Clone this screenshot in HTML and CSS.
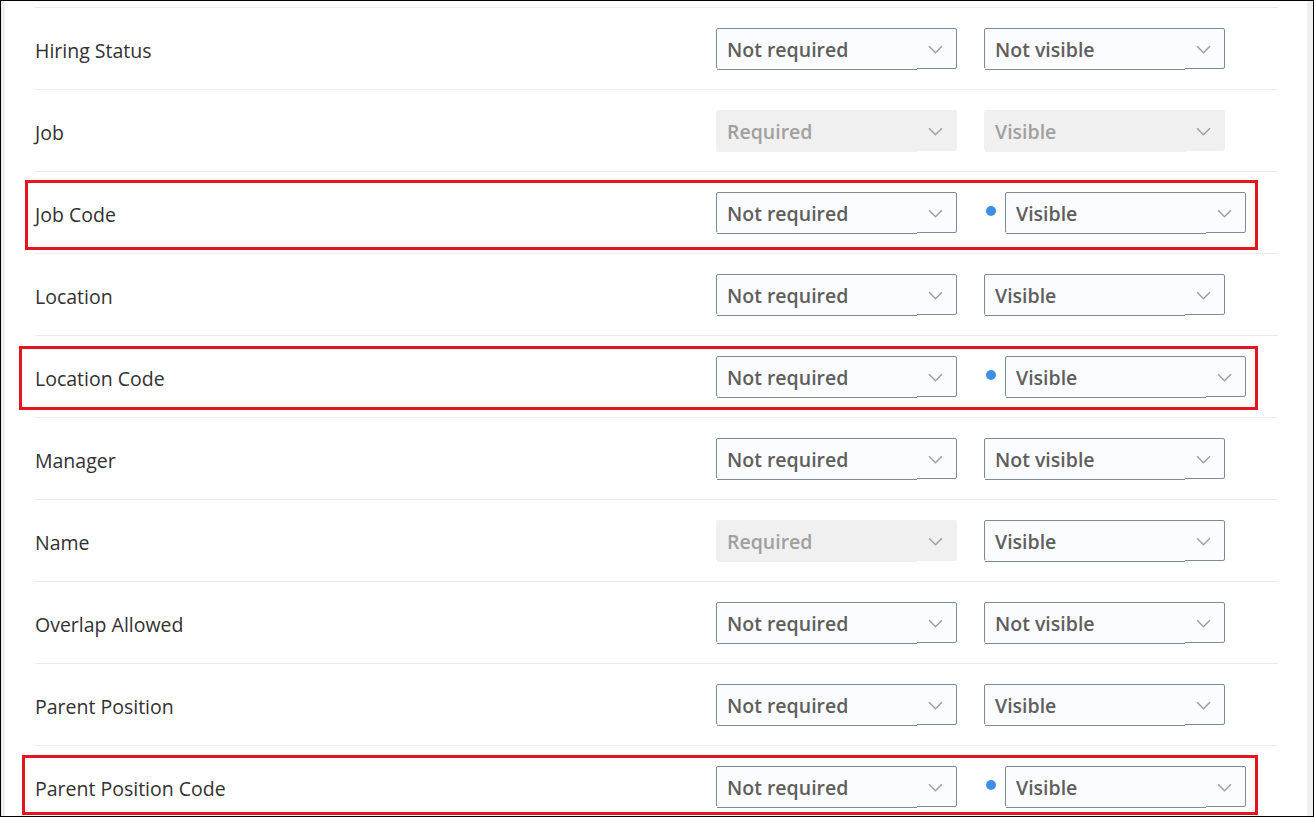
FILE: index.html
```html
<!DOCTYPE html>
<html lang="en">
<head>
    <meta charset="UTF-8">
    <meta name="viewport" content="width=device-width, initial-scale=1.0">
    <title>Position Fields | Settings</title>
    <link rel="stylesheet" href="styles.css">
</head>
<body>
    <div class="window">
        <div class="edge"></div>

        <div class="content">
            <div class="field-list">

                <div class="field-row">
                    <div class="field-name">Hiring Status</div>
                    <div class="field-cell">
                        <div class="select"><span>Not required</span><svg class="chevron" viewBox="0 0 14 8"><path d="M1 1l6 6 6-6"/></svg></div>
                    </div>
                    <div class="field-cell">
                        <div class="select"><span>Not visible</span><svg class="chevron" viewBox="0 0 14 8"><path d="M1 1l6 6 6-6"/></svg></div>
                    </div>
                </div>

                <div class="field-row">
                    <div class="field-name">Job</div>
                    <div class="field-cell">
                        <div class="select disabled"><span>Required</span><svg class="chevron" viewBox="0 0 14 8"><path d="M1 1l6 6 6-6"/></svg></div>
                    </div>
                    <div class="field-cell">
                        <div class="select disabled"><span>Visible</span><svg class="chevron" viewBox="0 0 14 8"><path d="M1 1l6 6 6-6"/></svg></div>
                    </div>
                </div>

                <div class="field-row">
                    <span class="mark mark-job-code"></span>
                    <div class="field-name">Job Code</div>
                    <div class="field-cell">
                        <div class="select"><span>Not required</span><svg class="chevron" viewBox="0 0 14 8"><path d="M1 1l6 6 6-6"/></svg></div>
                    </div>
                    <div class="field-cell">
                        <span class="changed-dot"></span>
                        <div class="select"><span>Visible</span><svg class="chevron" viewBox="0 0 14 8"><path d="M1 1l6 6 6-6"/></svg></div>
                    </div>
                </div>

                <div class="field-row">
                    <div class="field-name">Location</div>
                    <div class="field-cell">
                        <div class="select"><span>Not required</span><svg class="chevron" viewBox="0 0 14 8"><path d="M1 1l6 6 6-6"/></svg></div>
                    </div>
                    <div class="field-cell">
                        <div class="select"><span>Visible</span><svg class="chevron" viewBox="0 0 14 8"><path d="M1 1l6 6 6-6"/></svg></div>
                    </div>
                </div>

                <div class="field-row">
                    <span class="mark mark-location-code"></span>
                    <div class="field-name">Location Code</div>
                    <div class="field-cell">
                        <div class="select"><span>Not required</span><svg class="chevron" viewBox="0 0 14 8"><path d="M1 1l6 6 6-6"/></svg></div>
                    </div>
                    <div class="field-cell">
                        <span class="changed-dot"></span>
                        <div class="select"><span>Visible</span><svg class="chevron" viewBox="0 0 14 8"><path d="M1 1l6 6 6-6"/></svg></div>
                    </div>
                </div>

                <div class="field-row">
                    <div class="field-name">Manager</div>
                    <div class="field-cell">
                        <div class="select"><span>Not required</span><svg class="chevron" viewBox="0 0 14 8"><path d="M1 1l6 6 6-6"/></svg></div>
                    </div>
                    <div class="field-cell">
                        <div class="select"><span>Not visible</span><svg class="chevron" viewBox="0 0 14 8"><path d="M1 1l6 6 6-6"/></svg></div>
                    </div>
                </div>

                <div class="field-row">
                    <div class="field-name">Name</div>
                    <div class="field-cell">
                        <div class="select disabled"><span>Required</span><svg class="chevron" viewBox="0 0 14 8"><path d="M1 1l6 6 6-6"/></svg></div>
                    </div>
                    <div class="field-cell">
                        <div class="select"><span>Visible</span><svg class="chevron" viewBox="0 0 14 8"><path d="M1 1l6 6 6-6"/></svg></div>
                    </div>
                </div>

                <div class="field-row">
                    <div class="field-name">Overlap Allowed</div>
                    <div class="field-cell">
                        <div class="select"><span>Not required</span><svg class="chevron" viewBox="0 0 14 8"><path d="M1 1l6 6 6-6"/></svg></div>
                    </div>
                    <div class="field-cell">
                        <div class="select"><span>Not visible</span><svg class="chevron" viewBox="0 0 14 8"><path d="M1 1l6 6 6-6"/></svg></div>
                    </div>
                </div>

                <div class="field-row">
                    <div class="field-name">Parent Position</div>
                    <div class="field-cell">
                        <div class="select"><span>Not required</span><svg class="chevron" viewBox="0 0 14 8"><path d="M1 1l6 6 6-6"/></svg></div>
                    </div>
                    <div class="field-cell">
                        <div class="select"><span>Visible</span><svg class="chevron" viewBox="0 0 14 8"><path d="M1 1l6 6 6-6"/></svg></div>
                    </div>
                </div>

                <div class="field-row">
                    <span class="mark mark-parent-code"></span>
                    <div class="field-name">Parent Position Code</div>
                    <div class="field-cell">
                        <div class="select"><span>Not required</span><svg class="chevron" viewBox="0 0 14 8"><path d="M1 1l6 6 6-6"/></svg></div>
                    </div>
                    <div class="field-cell">
                        <span class="changed-dot"></span>
                        <div class="select"><span>Visible</span><svg class="chevron" viewBox="0 0 14 8"><path d="M1 1l6 6 6-6"/></svg></div>
                    </div>
                </div>

            </div>
        </div>

        <div class="scroll-track"></div>
    </div>
</body>
</html>
```

FILE: styles.css
```css
* {
    margin: 0;
    padding: 0;
    box-sizing: border-box;
    font-family: 'Open Sans', 'Noto Sans', sans-serif;
}

:root {
    --text: #323130;
    --select-text: #605e5c;
    --muted: #a19f9d;
    --divider: #edebe9;
    --field-border: #7a8c98;
    --field-bg: #fafcff;
    --disabled-bg: #f0f0f1;
    --accent: #3d8fe6;
    --mark: #e3161f;
}

body {
    background-color: #ffffff;
    color: var(--text);
    overflow: hidden;
}

.window {
    height: 817px;
    border: 1px solid #000;
    display: flex;
    overflow: hidden;
    background-color: #ffffff;
}

.edge {
    width: 4px;
    background-color: #efefef;
}

.scroll-track {
    width: 6px;
    background-color: #efefef;
}

.content {
    flex: 1;
    padding: 6px 29px 0 30px;
    overflow: hidden;
}

.field-row {
    position: relative;
    height: 82px;
    border-top: 1px solid var(--divider);
    display: grid;
    grid-template-columns: 654px 241px auto;
    column-gap: 27px;
    align-items: center;
}

.field-name {
    font-size: 19.5px;
    padding-top: 3px;
    color: var(--text);
    white-space: nowrap;
}

.field-cell {
    display: flex;
    align-items: center;
}

.select {
    position: relative;
    width: 241px;
    height: 41px;
    padding: 2px 13px 0 10px;
    display: flex;
    align-items: center;
    justify-content: space-between;
    border: 1px solid var(--field-border);
    border-radius: 2px;
    background-color: var(--field-bg);
    color: var(--select-text);
    font-size: 19.5px;
    font-weight: 600;
}

/* the underline of the left part sits a pixel lower */
.select::after {
    content: "";
    position: absolute;
    left: 0;
    bottom: -2px;
    width: 200px;
    height: 2px;
    background: linear-gradient(var(--field-bg) 50%, var(--field-border) 50%);
}

.select.disabled {
    border-color: var(--disabled-bg);
    background-color: var(--disabled-bg);
    color: var(--muted);
}

.select.disabled::after {
    background: var(--disabled-bg);
}

.chevron {
    width: 15px;
    height: 9px;
    fill: none;
    stroke: var(--muted);
    stroke-width: 1.4;
}

.changed-dot {
    width: 10px;
    height: 10px;
    margin: 0 9px 3px 2px;
    border-radius: 50%;
    background-color: var(--accent);
}

.mark {
    position: absolute;
    border: 3px solid var(--mark);
    pointer-events: none;
}

.mark-job-code {
    top: 8px;
    left: -10px;
    width: 1233px;
    height: 70px;
}

.mark-location-code {
    top: 10px;
    left: -16px;
    width: 1239px;
    height: 64px;
}

.mark-parent-code {
    top: 9px;
    left: -13px;
    width: 1236px;
    height: 60px;
}
```
